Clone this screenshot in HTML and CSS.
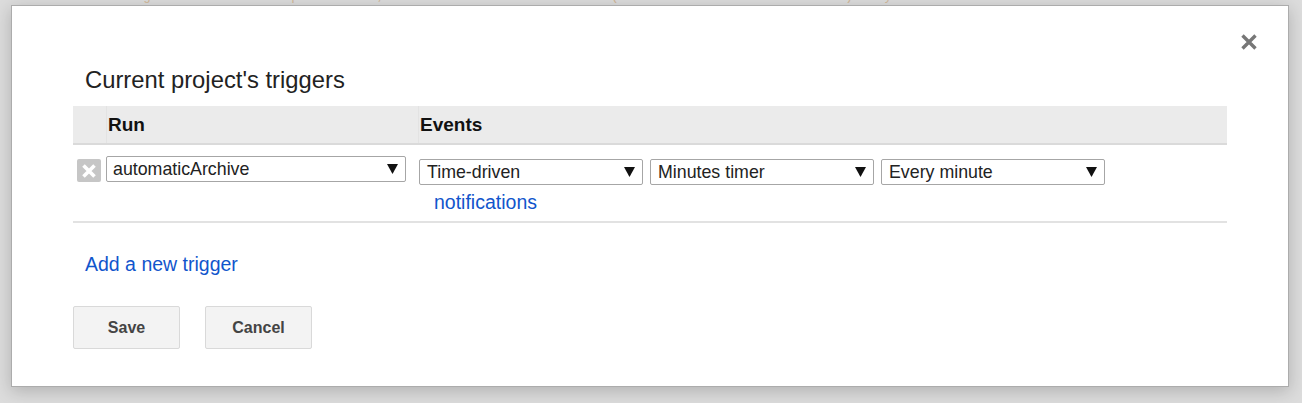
FILE: index.html
```html
<!DOCTYPE html>
<html>
<head>
<meta charset="utf-8">
<link rel="stylesheet" href="styles.css">
</head>
<body>
<div class="code"><div class="code-line">// Use following number of emails per 500 run, which is fast in most cases (the limit is set to 5 minutes) only</div></div>
<div class="dialog">
  <button class="close" aria-label="Close">
    <svg width="18" height="18" viewBox="0 0 18 18"><path d="M2.5 2.5 L15.5 15.5 M15.5 2.5 L2.5 15.5" stroke="#777" stroke-width="3.4" stroke-linecap="butt"/></svg>
  </button>
  <h1 class="title">Current project's triggers</h1>
  <div class="table">
    <div class="thead">
      <div class="th th-del"></div>
      <div class="th">Run</div>
      <div class="th">Events</div>
    </div>
    <div class="trow">
      <div class="td td-del">
        <span class="del-btn">
          <svg width="16" height="16" viewBox="0 0 16 16"><path d="M2.5 2.5 L13.5 13.5 M13.5 2.5 L2.5 13.5" stroke="#fff" stroke-width="3.6"/></svg>
        </span>
      </div>
      <div class="td td-run">
        <div class="select select-run"><span>automaticArchive</span><svg class="arrow" width="11" height="10" viewBox="0 0 11 10"><path d="M0 0 H11 L5.5 10 Z" fill="#111"/></svg></div>
      </div>
      <div class="td td-events">
        <div class="selects">
          <div class="select"><span>Time-driven</span><svg class="arrow" width="11" height="10" viewBox="0 0 11 10"><path d="M0 0 H11 L5.5 10 Z" fill="#111"/></svg></div>
          <div class="select"><span>Minutes timer</span><svg class="arrow" width="11" height="10" viewBox="0 0 11 10"><path d="M0 0 H11 L5.5 10 Z" fill="#111"/></svg></div>
          <div class="select"><span>Every minute</span><svg class="arrow" width="11" height="10" viewBox="0 0 11 10"><path d="M0 0 H11 L5.5 10 Z" fill="#111"/></svg></div>
        </div>
        <a class="link notif" href="#">notifications</a>
      </div>
    </div>
  </div>
  <a class="link add" href="#">Add a new trigger</a>
  <div class="buttons">
    <button class="btn">Save</button>
    <button class="btn">Cancel</button>
  </div>
</div>
</body>
</html>
```
FILE: styles.css
```css
html, body {
  margin: 0;
  padding: 0;
}
body {
  background: #dcdcdc;
  font-family: "Liberation Sans", Arial, sans-serif;
  color: #222;
  width: 1302px;
  height: 403px;
  overflow: hidden;
  position: relative;
}
.code {
  height: 5px;
  overflow: hidden;
  padding-left: 26px;
}
.code-line {
  margin-top: -10px;
  font-family: "Liberation Mono", monospace;
  font-size: 13px;
  line-height: 14px;
  color: #c99a63;
  white-space: pre;
  opacity: 0.55;
}
.dialog {
  position: absolute;
  left: 11px;
  top: 5px;
  width: 1154px;
  height: 320px;
  padding: 60px 61px 0 61px;
  background: #fff;
  border: 1px solid #acacac;
  box-shadow: 0 4px 16px rgba(0, 0, 0, 0.2);
}
.close {
  position: absolute;
  top: 27px;
  right: 30px;
  width: 18px;
  height: 18px;
  padding: 0;
  border: 0;
  background: none;
  display: flex;
}
.title {
  margin: 0 0 12px 12px;
  font-size: 23.8px;
  line-height: 28px;
  font-weight: normal;
  color: #222;
}
.thead {
  display: grid;
  grid-template-columns: 33px 312px 1fr;
  height: 37px;
  background: #ebebeb;
  border-bottom: 2px solid #dadada;
}
.th {
  font-size: 19px;
  font-weight: bold;
  line-height: 37px;
  padding-left: 1px;
  color: #111;
  border-left: 1px solid #e3e3e3;
}
.th-del {
  border-left: 0;
}
.trow {
  display: grid;
  grid-template-columns: 33px 312px 1fr;
  height: 76px;
  border-bottom: 2px solid #e2e2e2;
}
.td-del {
  padding: 14px 0 0 4px;
}
.del-btn {
  display: flex;
  align-items: center;
  justify-content: center;
  width: 24px;
  height: 23px;
  background: #c6c6c6;
  border-radius: 2px;
}
.td-run {
  padding-top: 11px;
}
.td-events {
  padding: 14px 0 0 1px;
}
.selects {
  display: flex;
  gap: 7px;
}
.select {
  box-sizing: border-box;
  width: 224px;
  height: 26px;
  border: 1px solid #a6a6a6;
  border-radius: 2px;
  background: #fff;
  display: flex;
  align-items: center;
  justify-content: space-between;
  padding: 0 7px 0 7px;
  font-size: 17.8px;
  color: #222;
}
.select-run {
  width: 300px;
  padding-left: 6px;
}
.arrow {
  flex: none;
}
.link {
  color: #1155cc;
  text-decoration: none;
  font-size: 19.5px;
  line-height: 22px;
  display: block;
}
.notif {
  margin: 6px 0 0 15px;
}
.add {
  margin: 30px 0 0 12px;
  width: max-content;
}
.buttons {
  display: flex;
  gap: 25px;
  margin-top: 31px;
}
.btn {
  width: 107px;
  height: 43px;
  background: #f3f3f3;
  border: 1px solid #d9d9d9;
  border-radius: 2px;
  font-family: "Liberation Sans", Arial, sans-serif;
  font-size: 16px;
  font-weight: bold;
  color: #444;
  padding: 0;
}
```
